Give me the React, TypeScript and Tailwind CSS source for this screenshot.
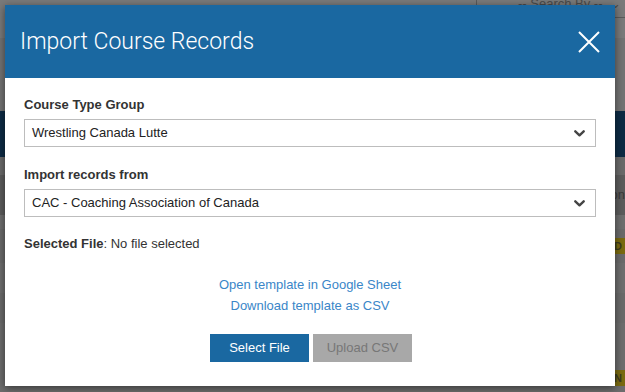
import React from "react";

function Chevron() {
  return (
    <svg width="11" height="7" viewBox="0 0 11 7" className="shrink-0">
      <path d="M1.3 1.3 L5.5 5.3 L9.7 1.3" fill="none" stroke="#444" strokeWidth="2.4" strokeLinecap="round" strokeLinejoin="round" />
    </svg>
  );
}

export default function App() {
  return (
    <div className="relative w-[625px] h-[392px] overflow-hidden bg-[#6f6f6f]" style={{ fontFamily: '"Liberation Sans", Arial, sans-serif' }}>
      {/* background page (dimmed) */}
      <div className="flex flex-col w-full h-full">
        <div className="h-[38px] bg-[#7a7a7a] flex justify-end">
          <div className="w-[149px] h-[18px] border-l border-b border-[#5a5a5a] pl-[41px] text-[13px] leading-[13px] text-[#4a4a4a] overflow-hidden">
            <span className="relative top-[-3px]">-- Search By --&nbsp;&nbsp;⌄</span>
          </div>
        </div>
        <div className="h-[73px] bg-[#737373]" />
        <div className="h-[46px] bg-[#0d2b44]" />
        <div className="h-[18px] bg-[#6a6a6a]" />
        <div className="h-[40px] bg-[#5c5c5c] flex justify-end items-center text-[13px] text-[#3a3a3a]">on</div>
        <div className="h-[14px] bg-[#6e6e6e]" />
        <div className="h-[34px] bg-[#6a6a6a] flex justify-end items-center">
          <span className="bg-[#7a6a10] text-[#3d3a20] text-[11px] font-bold px-[3px]">ED</span>
        </div>
        <div className="h-[30px] bg-[#6e6e6e]" />
        <div className="h-[30px] bg-[#6a6a6a]" />
        <div className="flex-1 bg-[#6d6d6d] flex justify-end items-end pb-[6px]">
          <span className="bg-[#7a6a10] text-[#3d3a20] text-[11px] font-bold px-[3px]">ON</span>
        </div>
      </div>

      {/* modal */}
      <div className="absolute left-[5px] top-[5px] w-[610px] h-[381px] bg-white shadow-[0_2px_8px_rgba(0,0,0,0.5)] flex flex-col">
        <div className="h-[73px] bg-[#1a68a1] flex items-center justify-between pl-[15px] pr-[14px]">
          <div className="text-white text-[23px] pt-[1px]" style={{ fontFamily: 'Roboto, sans-serif', fontWeight: 300 }}>
            Import Course Records
          </div>
          <svg width="24" height="24" viewBox="0 0 24 24">
            <path d="M2 2 L22 22 M22 2 L2 22" stroke="white" strokeWidth="2" />
          </svg>
        </div>
        <div className="flex flex-col px-[19px] pt-[19px] text-[#333]">
          <div className="text-[13px] font-bold leading-[16px]">Course Type Group</div>
          <div className="mt-[6px] h-[28px] border border-[#bdbdbd] flex items-center justify-between pl-[7px] pr-[10px] text-[13px] text-[#222]">
            <span>Wrestling Canada Lutte</span>
            <Chevron />
          </div>
          <div className="mt-[20px] text-[13px] font-bold leading-[16px]">Import records from</div>
          <div className="mt-[6px] h-[28px] border border-[#bdbdbd] flex items-center justify-between pl-[7px] pr-[10px] text-[13px] text-[#222]">
            <span>CAC - Coaching Association of Canada</span>
            <Chevron />
          </div>
          <div className="mt-[19px] text-[13px] leading-[16px]">
            <span className="font-bold">Selected File</span>: No file selected
          </div>
          <div className="mt-[25px] flex flex-col items-center text-[13px] text-[#3a86c8] leading-[16px] gap-[5px]">
            <span>Open template in Google Sheet</span>
            <span>Download template as CSV</span>
          </div>
          <div className="mt-[20px] flex justify-center gap-[4px] pl-[2px]">
            <div className="w-[99px] h-[28px] bg-[#1a68a1] text-white text-[13px] flex items-center justify-center">Select File</div>
            <div className="w-[99px] h-[28px] bg-[#a8a8a8] text-[#777] text-[13px] flex items-center justify-center">Upload CSV</div>
          </div>
        </div>
      </div>
    </div>
  );
}
